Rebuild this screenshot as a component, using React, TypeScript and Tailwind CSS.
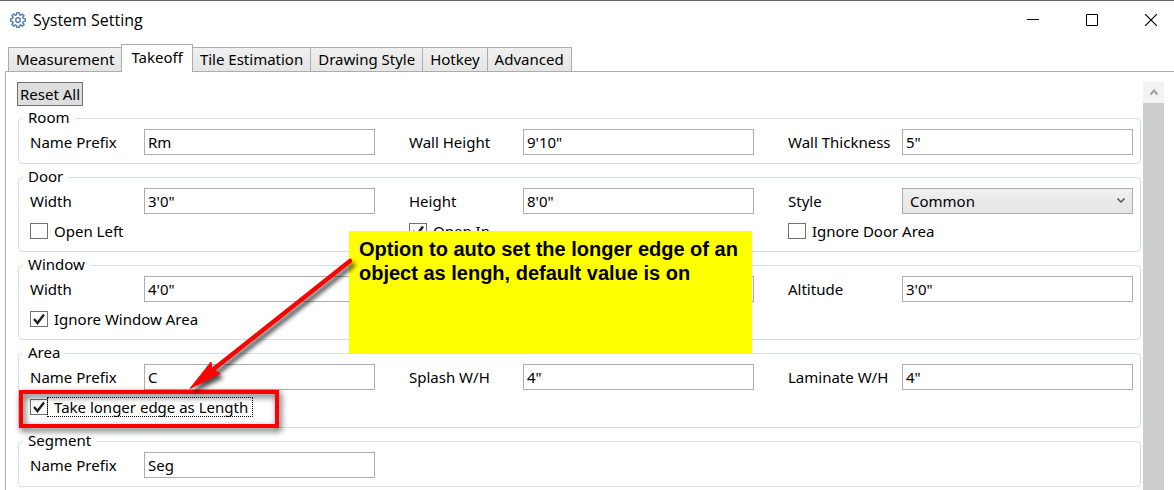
import { useState, type ReactNode } from "react";

const tabs = [
  "Measurement",
  "Takeoff",
  "Tile Estimation",
  "Drawing Style",
  "Hotkey",
  "Advanced",
];

function GearIcon() {
  return (
    <svg viewBox="0 0 16 16" className="w-4 h-4" fill="none" stroke="#5b87b5">
      <path
        strokeWidth="1.6"
        strokeLinejoin="round"
        d="M6.8 .8h2.4l.4 1.9 1.1.5 1.6-1.1 1.7 1.7-1.1 1.6.5 1.1 1.9.4v2.4l-1.9.4-.5 1.1 1.1 1.6-1.7 1.7-1.6-1.1-1.1.5-.4 1.9H6.8l-.4-1.9-1.1-.5-1.6 1.1L2 12.400l1.100-1.600-.5-1.100L.7 9.300V6.900l1.900-.4.5-1.100L2 3.800l1.700-1.700 1.600 1.100 1.100-.5z"
      />
      <circle cx="8" cy="8" r="2.300" strokeWidth="1.600" />
    </svg>
  );
}

function Group({ title, children }: { title: string; children: ReactNode }) {
  return (
    <fieldset className="min-w-0 border border-[#d5dfe5] rounded-[4px] pl-[11px] pr-[7px] pt-px pb-2">
      <legend className="-ml-[7px] px-[5px] h-5 leading-[18px]">{title}</legend>
      <div className="grid grid-cols-3 gap-x-[34px] gap-y-[5px]">{children}</div>
    </fieldset>
  );
}

function Field({ id, label, value }: { id: string; label: string; value: string }) {
  return (
    <div className="flex items-center h-[26px]">
      <label htmlFor={id} className="w-[114px] shrink-0 whitespace-nowrap">
        {label}
      </label>
      <input
        id={id}
        type="text"
        defaultValue={value}
        className="flex-1 min-w-0 h-[26px] px-[3px] border border-[#abadb3] bg-white outline-none"
      />
    </div>
  );
}

function Check({
  label,
  checked = false,
  focused = false,
}: {
  label: string;
  checked?: boolean;
  focused?: boolean;
}) {
  return (
    <label className="flex items-center h-6 w-fit">
      <span className="grid">
        <input
          type="checkbox"
          defaultChecked={checked}
          className="peer col-start-1 row-start-1 appearance-none w-[18px] h-4 border border-[#707070] bg-white"
        />
        <svg
          viewBox="0 0 18 16"
          className="col-start-1 row-start-1 w-[18px] h-4 pointer-events-none invisible peer-checked:visible"
          fill="none"
          stroke="#212121"
          strokeWidth="2.4"
        >
          <path d="M4 8l3.500 4L14 3.500" />
        </svg>
      </span>
      <span
        className={
          focused
            ? "pl-[6px] pr-1 leading-[18px] outline-1 outline-dotted outline-black"
            : "pl-[6px] leading-[18px]"
        }
      >
        {label}
      </span>
    </label>
  );
}

export default function App() {
  const [active, setActive] = useState("Takeoff");

  return (
    <div className="relative min-h-screen flex flex-col overflow-hidden bg-white border-t border-[#666666] text-black text-[15px] font-['Noto_Sans',sans-serif]">
      {/* Title bar */}
      <header className="flex items-center h-[38px] pl-[10px] pr-[17px]">
        <GearIcon />
        <h1 className="ml-[7px] text-[16px] font-['Open_Sans',sans-serif]">System Setting</h1>
        <div className="ml-auto flex gap-[47px]">
          <button aria-label="Minimize">
            <svg viewBox="0 0 12 12" className="w-3 h-3" stroke="black">
              <path d="M0 5.500h12" />
            </svg>
          </button>
          <button aria-label="Maximize">
            <svg viewBox="0 0 12 12" className="w-3 h-3" fill="none" stroke="black">
              <path d="M.5 .5h11v11H.5z" />
            </svg>
          </button>
          <button aria-label="Close">
            <svg viewBox="0 0 12 12" className="w-3 h-3" stroke="black" strokeWidth="1.200">
              <path d="M0 0l12 12M12 0L0 12" />
            </svg>
          </button>
        </div>
      </header>

      {/* Tabs */}
      <div role="tablist" className="flex items-end pl-2 pt-[5px]">
        {tabs.map((tab) => (
          <button
            key={tab}
            role="tab"
            aria-selected={tab === active}
            onClick={() => setActive(tab)}
            className={
              tab === active
                ? "relative -mb-px h-7 px-[9px] pb-1 -ml-px leading-6 bg-white border border-b-0 border-[#acacac] whitespace-nowrap"
                : "h-6 px-[7px] pb-px leading-[22px] bg-linear-to-b from-[#f0f0f0] to-[#e5e5e5] border border-b-0 border-[#acacac] not-first:border-l-0 whitespace-nowrap"
            }
          >
            {tab}
          </button>
        ))}
      </div>

      {/* Tab page */}
      <main className="flex-1 flex ml-[5px] pl-[11px] pr-[10px] pt-[10px] gap-[2px] border-t border-l border-[#acacac]">
        <div className="flex-1 min-w-0">
          <button className="block h-6 px-[2px] pb-px bg-[#dddddd] border border-[#707070] leading-5">
            Reset All
          </button>
          <div className="flex flex-col gap-[3px] pt-[2px] pl-px">
            <Group title="Room">
              <Field id="room-prefix" label="Name Prefix" value="Rm" />
              <Field id="wall-height" label="Wall Height" value={"9'10\""} />
              <Field id="wall-thickness" label="Wall Thickness" value={"5\""} />
            </Group>

            <Group title="Door">
              <Field id="door-width" label="Width" value={"3'0\""} />
              <Field id="door-height" label="Height" value={"8'0\""} />
              <div className="flex items-center h-[26px]">
                <label htmlFor="door-style" className="w-[114px] shrink-0">
                  Style
                </label>
                <div className="relative flex-1 min-w-0">
                  <select
                    id="door-style"
                    className="block appearance-none w-full h-[26px] px-[7px] border border-[#acacac] bg-linear-to-b from-[#f0f0f0] to-[#e5e5e5]"
                  >
                    <option>Common</option>
                  </select>
                  <svg
                    viewBox="0 0 8 5"
                    className="absolute right-2 top-[10px] w-2 h-[5px] pointer-events-none"
                    fill="none"
                    stroke="#606060"
                    strokeWidth="1.600"
                  >
                    <path d="M.5 .5L4 4 7.500 .5" />
                  </svg>
                </div>
              </div>
              <Check label="Open Left" />
              <Check label="Open In" checked />
              <Check label="Ignore Door Area" />
            </Group>

            <Group title="Window">
              <Field id="window-width" label="Width" value={"4'0\""} />
              <div className="flex items-center h-[26px] pl-[114px]">
                <input
                  type="text"
                  aria-label="Height"
                  className="flex-1 min-w-0 h-[26px] px-[3px] border border-[#abadb3] bg-white outline-none"
                />
              </div>
              <Field id="window-altitude" label="Altitude" value={"3'0\""} />
              <Check label="Ignore Window Area" checked />
            </Group>

            <Group title="Area">
              <Field id="area-prefix" label="Name Prefix" value="C" />
              <Field id="splash" label="Splash W/H" value={"4\""} />
              <Field id="laminate" label="Laminate W/H" value={"4\""} />
              <Check label="Take longer edge as Length" checked focused />
            </Group>

            <Group title="Segment">
              <Field id="segment-prefix" label="Name Prefix" value="Seg" />
            </Group>
          </div>
        </div>

        {/* Scrollbar */}
        <div className="w-[21px] shrink-0 flex flex-col bg-[#cdcdcd]">
          <button
            aria-label="Scroll up"
            className="h-[21px] flex items-center justify-center bg-[#f3f3f3]"
          >
            <svg viewBox="0 0 8 7" className="w-2 h-[7px]" fill="none" stroke="#a0a0a0" strokeWidth="2">
              <path d="M.5 5.500L4 1.500l3.500 4" />
            </svg>
          </button>
        </div>
      </main>

      {/* Callout */}
      <div className="absolute left-[349px] top-[230px] w-[403px] h-[122px] pl-[10px] pt-[6px] bg-[#ffff00] font-['Liberation_Sans',Arial,sans-serif] font-bold text-[20px] leading-6">
        Option to auto set the longer edge of an
        <br />
        object as lengh, default value is on
      </div>
      <div className="absolute left-[19px] top-[389px] w-[260px] h-[38px] border-4 border-[#ff0000] pointer-events-none [filter:drop-shadow(2px_3px_3px_rgba(0,0,0,0.7))]" />
      <svg
        viewBox="0 0 180 150"
        className="absolute left-[180px] top-[249px] w-[180px] h-[150px] pointer-events-none [filter:drop-shadow(3px_4px_2px_rgba(0,0,0,0.7))]"
      >
        <path d="M170 11L30 122" stroke="#ff0000" strokeWidth="4.500" strokeLinecap="round" />
        <path d="M10 138.500L31 112L32 120L40 123.500z" fill="#ff0000" stroke="#ff0000" />
      </svg>
    </div>
  );
}
